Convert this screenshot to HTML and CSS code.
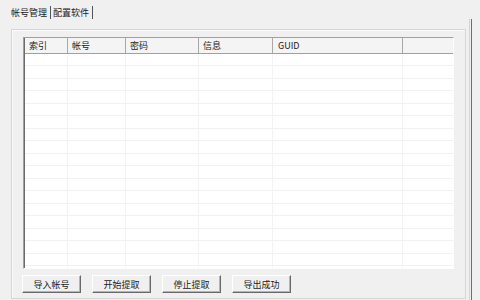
FILE: index.html
```html
<!DOCTYPE html>
<html lang="zh-CN">

<head>
    <meta charset="UTF-8">
    <title>帐号管理</title>
    <link rel="stylesheet" href="styles.css">
</head>

<body>
    <div class="main">
        <!-- Tabs -->
        <div class="tabbar">
            <span class="tab tab-active">帐号管理</span>
            <span class="tab">配置软件</span>
        </div>

        <!-- Tab page -->
        <div class="panel">
            <div class="listview">
                <div class="lv-head">
                    <div class="col c1">索引</div>
                    <div class="col c2">帐号</div>
                    <div class="col c3">密码</div>
                    <div class="col c4">信息</div>
                    <div class="col c5">GUID</div>
                    <div class="col c6"></div>
                </div>
                <div class="lv-body">
                    <div class="col c1"></div>
                    <div class="col c2"></div>
                    <div class="col c3"></div>
                    <div class="col c4"></div>
                    <div class="col c5"></div>
                    <div class="col c6"></div>
                </div>
            </div>

            <div class="buttons">
                <button class="btn">导入帐号</button>
                <button class="btn">开始提取</button>
                <button class="btn">停止提取</button>
                <button class="btn">导出成功</button>
            </div>
        </div>
    </div>
    <div class="divider"></div>
</body>
</html>
```
FILE: styles.css
```css
body {
    margin: 0;
    width: 480px;
    height: 300px;
    background-color: #f0f0f0;
    font-family: "Noto Sans CJK SC", "Liberation Sans", sans-serif;
    font-size: 9px;
    color: #1a1a1a;
    display: flex;
    overflow: hidden;
}

.main {
    width: 471px;
}

/* window edge on the right */
.divider {
    width: 1px;
    margin-top: 19px;
    background-color: #6e6e6e;
    box-shadow: -2px 0 0 #d4d4d4;
}

/* Tabs */
.tabbar {
    display: flex;
    padding: 6px 0 0 11px;
}

.tab {
    line-height: 13px;
    padding: 0 3px 0 0;
    border-right: 1px solid #555;
}

.tab + .tab {
    padding: 0 3px 0 2px;
}

/* Tab page */
.panel {
    box-sizing: border-box;
    margin: 10px 0 0 11px;
    width: 455px;
    height: 270px;
    padding: 7px 0 0 10px;
    border: 1px solid #d6d6d6;
    box-shadow: inset 1px 1px 0 #fbfbfb;
}

/* List view */
.listview {
    box-sizing: border-box;
    margin-left: 1px;
    width: 431px;
    height: 232px;
    border-top: 1px solid #a0a0a0;
    border-left: 1px solid #a0a0a0;
    border-right: 1px solid #fdfdfd;
    border-bottom: 1px solid #fdfdfd;
    box-shadow: inset 1px 0 0 #6b6b6b;
    background-color: #fff;
    display: flex;
    flex-direction: column;
}

.lv-head {
    display: flex;
    height: 15px;
    margin-left: 1px;
    background-color: #f4f4f4;
    border-bottom: 1px solid #a0a0a0;
}

.lv-head .col {
    line-height: 15px;
    padding-left: 4px;
    border-right: 1px solid #a8a8a8;
    white-space: nowrap;
}

.lv-head .c5 {
    padding-left: 5px;
}

.lv-body {
    flex: 1;
    display: flex;
    margin-left: 1px;
    background-image: repeating-linear-gradient(to bottom, transparent 0, transparent 11.5px, #f1f1f1 11.5px, #f1f1f1 12.5px);
}

.lv-body .col {
    border-right: 1px solid #f3f3f3;
}

.col {
    box-sizing: border-box;
}

.c1 { width: 43px; }
.c2 { width: 58px; }
.c3 { width: 73px; }
.c4 { width: 74px; }
.c5 { width: 130px; }
.c6 { flex: 1; border-right: none !important; }

/* Buttons */
.buttons {
    display: flex;
    gap: 11px;
    margin-top: 6px;
}

.btn {
    box-sizing: border-box;
    width: 59px;
    height: 18px;
    padding: 0;
    font-family: inherit;
    font-size: 9px;
    color: #1a1a1a;
    background-color: #f0f0f0;
    border-top: 1px solid #fff;
    border-left: 1px solid #fff;
    border-right: 1px solid #696969;
    border-bottom: 1px solid #696969;
    box-shadow: inset -1px -1px 0 #b4b4b4;
}
```
